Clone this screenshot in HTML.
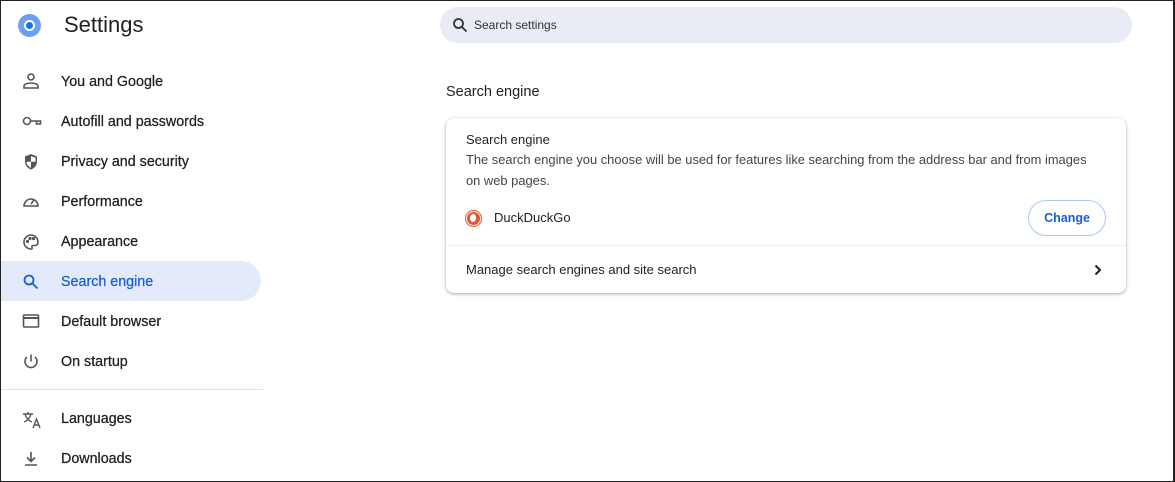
<!DOCTYPE html>
<html><head><style>
*{margin:0;padding:0;box-sizing:border-box}
body{width:1175px;height:482px;overflow:hidden;background:#fff;font-family:"Liberation Sans",Roboto,sans-serif;position:relative;color:#1f1f1f}
.frame{position:absolute;left:0;top:0;width:1175px;height:482px;border:1px solid #222;border-right-width:2px;pointer-events:none}
.logo{position:absolute;left:18px;top:14px;width:23px;height:23px;border-radius:50%;background:#6f9ff2}
.logo:after{content:"";position:absolute;left:6px;top:6px;width:11px;height:11px;border-radius:50%;background:#1a73e8;border:2px solid #fff;box-sizing:border-box}
.title{position:absolute;left:64px;top:12px;font-size:22px;color:#1f1f1f}
.item{position:absolute;left:0;width:261px;height:40px;font-size:14.3px;color:#1f1f1f;line-height:42px;padding-left:61px;-webkit-text-stroke:0.25px #1f1f1f}
.item svg{position:absolute;left:22px;top:12px}
.sel{background:#e3ebfb;border-radius:0 20px 20px 0;color:#1a5fd0;-webkit-text-stroke:0.25px #1a5fd0}
.div{position:absolute;left:0;top:389px;width:263px;height:1px;background:#e3e3e3}
.search{position:absolute;left:440px;top:7px;width:692px;height:36px;border-radius:18px;background:#e9ebf5;font-size:12px;line-height:36px;padding-left:34px;color:#333}
.search svg{position:absolute;left:12px;top:10px}
.h{position:absolute;left:446px;top:84px;font-size:14.5px;color:#222}
.card{position:absolute;left:446px;top:118px;width:680px;height:175px;border-radius:8px;box-shadow:0 1px 3px rgba(0,0,0,.35);background:#fff}
.c1{position:absolute;left:20px;top:14px;font-size:13px;color:#222}
.c2{position:absolute;left:20px;top:31px;width:660px;font-size:12.9px;line-height:21px;color:#444;white-space:nowrap}
.ddg{position:absolute;left:20px;top:93px;width:15px;height:15px;border-radius:50%;background:#de5833;border:1.5px solid #fff;box-shadow:0 0 0 1px #de5833}
.ddg:after{content:"";position:absolute;left:3px;top:2px;width:6px;height:8px;border-radius:50%;background:#fff}
.dn{position:absolute;left:48px;top:92px;font-size:13px;color:#222}
.btn{position:absolute;left:582px;top:82px;width:78px;height:36px;border:1px solid #a8c7fa;border-radius:18px;color:#1a5fd0;font-weight:bold;font-size:12.5px;text-align:center;line-height:34px}
.sep{position:absolute;left:0;top:127px;width:680px;height:1px;background:#ececec}
.m{position:absolute;left:20px;top:144px;font-size:13px;color:#222}
.chev{position:absolute;left:647px;top:146px}
</style></head><body>
<div class="logo"></div>
<div class="title">Settings</div>

<div class="item" style="top:61px"><svg width="18" height="16" viewBox="0 0 18 16" fill="none" stroke="#555" stroke-width="1.6"><circle cx="9" cy="4" r="3"/><path d="M2 15v-2c0-2 4-3 7-3s7 1 7 3v2z"/></svg>You and Google</div>
<div class="item" style="top:101px"><svg width="20" height="16" viewBox="0 0 20 16" fill="none" stroke="#555" stroke-width="1.6"><circle cx="5" cy="8" r="3.5"/><path d="M8.5 8h10v3h-4v-3"/></svg>Autofill and passwords</div>
<div class="item" style="top:141px"><svg width="18" height="18" viewBox="0 0 18 18"><path d="M9 1l6 2.5v5c0 4-3 7-6 8-3-1-6-4-6-8v-5z" fill="#555"/><path d="M9 3l4.5 1.8v4H9z M9 8.8v6c-2-.8-4.5-3-4.5-6z" fill="#fff"/></svg>Privacy and security</div>
<div class="item" style="top:181px"><svg width="18" height="16" viewBox="0 0 18 16" fill="none" stroke="#555" stroke-width="1.6"><path d="M2 13a7 7 0 1 1 14 0z"/><path d="M9 11l3-4"/></svg>Performance</div>
<div class="item" style="top:221px"><svg width="18" height="18" viewBox="0 0 18 18" fill="none" stroke="#555" stroke-width="1.6"><path d="M9 2a7 7 0 0 0 0 14c1 0 1.5-.7 1-1.5-.5-1 0-2 1.2-2H13a3 3 0 0 0 3-3C16 5 13 2 9 2z"/><circle cx="5.5" cy="8.5" r=".8" fill="#555"/><circle cx="8" cy="5.5" r=".8" fill="#555"/><circle cx="11.5" cy="5.5" r=".8" fill="#555"/></svg>Appearance</div>
<div class="item sel" style="top:261px"><svg width="18" height="18" viewBox="0 0 18 18" fill="none" stroke="#1a5fd0" stroke-width="1.8"><circle cx="7" cy="7" r="4.5"/><path d="M10.5 10.5l5 5"/></svg>Search engine</div>
<div class="item" style="top:301px"><svg width="18" height="16" viewBox="0 0 18 16" fill="none" stroke="#555" stroke-width="1.6"><rect x="1.5" y="2" width="15" height="12" rx="1"/><path d="M1.5 5h15" stroke-width="2"/></svg>Default browser</div>
<div class="item" style="top:341px"><svg width="18" height="18" viewBox="0 0 18 18" fill="none" stroke="#555" stroke-width="1.6"><path d="M9 1.5v7"/><path d="M5 4a6 6 0 1 0 8 0"/></svg>On startup</div>
<div class="div"></div>
<div class="item" style="top:398px"><svg width="20" height="20" viewBox="0 0 20 20" fill="none" stroke="#555" stroke-width="1.4"><path d="M1 4h10M6 2v2M3 4c1 4 4 7 7 8M9 4c-1 4-4 7-7 8"/><path d="M11 18l3.5-9 3.5 9M12.3 15h4.4"/></svg>Languages</div>
<div class="item" style="top:438px"><svg width="18" height="18" viewBox="0 0 18 18" fill="none" stroke="#555" stroke-width="1.6"><path d="M9 2v9M5 7.5l4 4 4-4M3 15h12"/></svg>Downloads</div>

<div class="search"><svg width="16" height="16" viewBox="0 0 16 16" fill="none" stroke="#333" stroke-width="1.8"><circle cx="6.5" cy="6.5" r="4.5"/><path d="M10 10l4.5 4.5"/></svg>Search settings</div>
<div class="h">Search engine</div>
<div class="card">
<div class="c1">Search engine</div>
<div class="c2">The search engine you choose will be used for features like searching from the address bar and from images<br>on web pages.</div>
<div class="ddg"></div>
<div class="dn">DuckDuckGo</div>
<div class="btn">Change</div>
<div class="sep"></div>
<div class="m">Manage search engines and site search</div>
<svg class="chev" width="10" height="12" viewBox="0 0 10 12" fill="none" stroke="#222" stroke-width="2"><path d="M2.5 1.5l4.5 4.5-4.5 4.5"/></svg>
</div>
<div class="frame"></div>
</body></html>
